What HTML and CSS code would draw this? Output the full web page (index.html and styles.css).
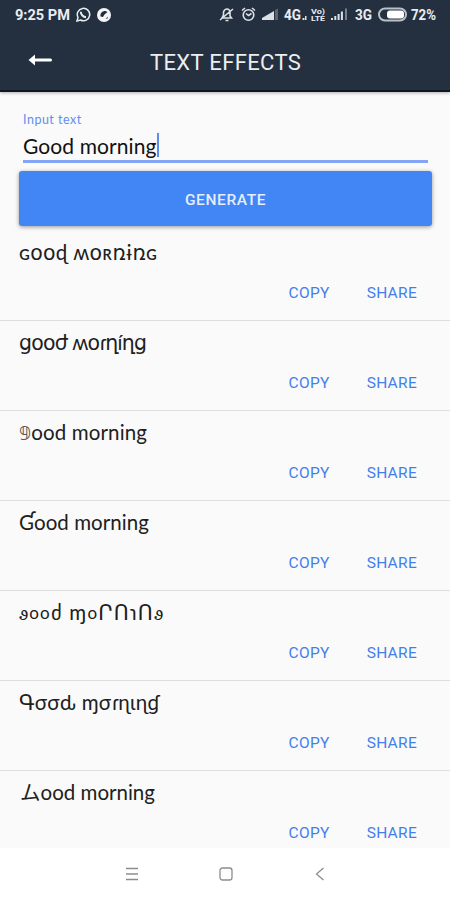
FILE: index.html
```html
<!DOCTYPE html>
<html lang="en">
<head>
    <meta charset="UTF-8">
    <meta name="viewport" content="width=device-width, initial-scale=1.0">
    <title>Text Effects</title>
    <link rel="stylesheet" href="styles.css">
</head>
<body>
    <header class="app-header">
        <div class="status-bar">
            <div class="status-left">
                <svg class="status-label" width="56" height="16"><text x="0" y="14" textLength="55" lengthAdjust="spacingAndGlyphs">9:25 PM</text></svg>
                <svg class="whatsapp" width="15" height="15" viewBox="0 0 15 15" fill="none" stroke="#e9edf1">
                    <path d="M1 14l1-3.6A6.2 6.2 0 1 1 4.600 13z" stroke-width="1.500"/>
                    <path d="M4.800 4.700c0 3 2.500 5.400 5.200 5.500" stroke-width="2"/>
                </svg>
                <svg class="browser" width="14" height="14" viewBox="0 0 14 14">
                    <circle cx="7" cy="7" r="7" fill="#f3f5f7"/>
                    <path d="M3.500 8.500C3 5 5.500 2.800 8.500 3L10.500 4 7.500 6.500 6 9zM8.500 11l2.500-2.500-.5 2z" fill="#222e3e"/>
                </svg>
            </div>
            <svg class="status-right" width="222" height="18" viewBox="218 6 222 18">
                <g fill="none" stroke="#dce1e6" stroke-width="1.600">
                    <path d="M220 20L233 9M222 18h9.500l-1.500-2v-4q-.5-3-3-3t-3.500 3V15zM225.500 20.500h3"/>
                    <circle cx="248.500" cy="15" r="5.300"/>
                    <path d="M242 10.500l3-2.500M252 8l3 2.500M246 13.500l2.500 2 3-2"/>
                </g>
                <g fill="#dce1e6">
                    <path d="M262 20v-2l12-7v9z"/>
                    <path d="M275 20h3V8.500l-3 1.500z" opacity=".3"/>
                    <path d="M331 20h2v-2h-2zM334.300 20h2v-4h-2zM337.600 20h2v-6h-2zM340.900 20h2v-8.500h-2z"/>
                    <path d="M345 20h2V8.500h-2z" opacity=".45"/>
                    <path d="M302.500 20v-2h2v2zM305 20v-4h1.500v4z"/>
                </g>
                <text x="284" y="20" textLength="17" lengthAdjust="spacingAndGlyphs">4G</text>
                <text class="volte" x="311" y="13.500" textLength="14" lengthAdjust="spacingAndGlyphs">Vo)</text>
                <text class="volte" x="311" y="21" textLength="14" lengthAdjust="spacingAndGlyphs">LTE</text>
                <text x="355" y="20" textLength="17" lengthAdjust="spacingAndGlyphs">3G</text>
                <rect x="379" y="8.500" width="27" height="12" rx="6" fill="none" stroke="#bac1c9" stroke-width="2"/>
                <rect x="387" y="10.500" width="17" height="8" rx="3" fill="#fff"/>
                <text x="411" y="20" textLength="25" lengthAdjust="spacingAndGlyphs">72%</text>
            </svg>
        </div>
        <div class="title-bar">
            <svg class="back" width="26" height="14" viewBox="0 0 26 14">
                <path d="M6 7h16.500" stroke="#fff" stroke-width="3" stroke-linecap="round"/>
                <path d="M0.500 7l6.500-5.500v11z" fill="#fff"/>
            </svg>
            <h1>TEXT EFFECTS</h1>
        </div>
    </header>

    <main>
        <div class="input-group">
            <label>Input text</label>
            <div class="input-text"><span>Good morning</span></div>
        </div>
        <button class="generate">GENERATE</button>

        <ul class="results">
            <li>
                <svg class="effect" width="220" height="30"><text x="19" y="20" textLength="138">ɢօօɖ ʍօʀռɨռɢ</text></svg>
                <div class="actions"><button>COPY</button><button>SHARE</button></div>
            </li>
            <li>
                <svg class="effect" width="220" height="30"><text x="19" y="20" textLength="128">ցօօժ ʍօɾղíղց</text></svg>
                <div class="actions"><button>COPY</button><button>SHARE</button></div>
            </li>
            <li>
                <svg class="effect" width="220" height="30"><text x="19" y="20" textLength="128"><tspan class="outlined">𝟡</tspan>ood morning</text></svg>
                <div class="actions"><button>COPY</button><button>SHARE</button></div>
            </li>
            <li>
                <svg class="effect" width="220" height="30"><text x="19" y="20" textLength="130">Ɠood morning</text></svg>
                <div class="actions"><button>COPY</button><button>SHARE</button></div>
            </li>
            <li>
                <svg class="effect" width="220" height="30"><text x="19" y="20" textLength="144"><tspan class="curl">ꮽ</tspan><tspan class="ring" dy="-1">oo</tspan><tspan dy="1">ძ ɱ</tspan><tspan class="ring" dy="-1">o</tspan><tspan dy="1">ՐՈɿՈ</tspan><tspan class="curl">ꮽ</tspan></text></svg>
                <div class="actions"><button>COPY</button><button>SHARE</button></div>
            </li>
            <li>
                <svg class="effect" width="220" height="30"><text x="19" y="20" textLength="140">Գσσԃ ɱσɾɳιɳɠ</text></svg>
                <div class="actions"><button>COPY</button><button>SHARE</button></div>
            </li>
            <li>
                <svg class="effect" width="220" height="30"><text x="20" y="20" textLength="135">ムood morning</text></svg>
                <div class="actions"><button>COPY</button><button>SHARE</button></div>
            </li>
        </ul>
    </main>

    <nav class="nav-bar">
        <svg width="14" height="14" viewBox="0 0 14 14"><path d="M1 1.500h12M1 7h12M1 12.500h12"/></svg>
        <svg width="14" height="14" viewBox="0 0 14 14"><rect x="1" y="1" width="12" height="12" rx="2.500"/></svg>
        <svg width="14" height="14" viewBox="0 0 14 14"><path d="M10.500 1l-7 6 7 6"/></svg>
    </nav>
</body>
</html>
```
FILE: styles.css
```css
* {
    box-sizing: border-box;
}

body {
    margin: 0;
    height: 900px;
    overflow: hidden;
    display: flex;
    flex-direction: column;
    background-color: #fafafa;
    font-family: Lato, "Noto Sans", "DejaVu Sans", "Noto Sans CJK JP", sans-serif;
}

.app-header {
    height: 92px;
    flex-shrink: 0;
    background-color: #243040;
    border-bottom: 2px solid #0d1725;
    box-shadow: 0 1px 3px rgba(50, 30, 50, 0.35);
}

.status-bar {
    height: 30px;
    display: flex;
    justify-content: space-between;
    padding: 6px 10px 0 15px;
}

.status-left {
    display: flex;
    gap: 5px;
}

.whatsapp {
    margin-top: 1px;
}

.browser {
    margin: 2px 0 0 1px;
}

.status-bar text {
    font-family: Roboto, sans-serif;
    font-size: 14px;
    font-weight: 700;
    fill: #e9edf1;
}

.status-bar .volte {
    font-size: 8px;
}

.title-bar {
    height: 60px;
    display: flex;
    align-items: center;
    padding-left: 28px;
}

.back {
    margin-bottom: 1px;
}

h1 {
    margin: 4px 0 0 96px;
    font-family: Roboto, sans-serif;
    font-size: 22px;
    font-weight: 400;
    letter-spacing: 0.35px;
    color: #eceef0;
}

main {
    height: 756px;
    overflow: hidden;
}

.input-group {
    width: 405px;
    height: 71px;
    margin-left: 23px;
    padding-top: 20px;
    border-bottom: 3px solid #83a5f4;
}

label {
    display: block;
    height: 15px;
    font-size: 12.5px;
    line-height: 15px;
    letter-spacing: 0.5px;
    color: #628df0;
}

.input-text {
    display: flex;
    color: #111;
    font-size: 21px;
    line-height: 25px;
    letter-spacing: 0.1px;
    margin-top: 6px;
}

.input-text span {
    border-right: 2px solid #5b8def;
    height: 24px;
    line-height: 26px;
}

.generate {
    display: block;
    width: 413px;
    height: 55px;
    margin: 8px 0 0 19px;
    padding-top: 4px;
    border: none;
    border-radius: 3px;
    background-color: #4285f4;
    color: #e5eeff;
    font-family: Roboto, sans-serif;
    font-size: 15.5px;
    font-weight: 500;
    letter-spacing: 0.6px;
    box-shadow: 0 1px 4px rgba(0, 0, 0, 0.4);
}

.results {
    list-style: none;
    margin: 5px 0 0;
    padding: 0;
}

.results li {
    height: 90px;
    padding-top: 9px;
    border-bottom: 1px solid #dedede;
}

.effect {
    display: block;
}

.effect text {
    font-size: 20.5px;
    fill: #202020;
}

.effect .outlined {
    font-size: 19px;
    fill: #555;
}

.effect .curl {
    font-size: 21px;
}

.effect .ring {
    font-size: 17px;
}

.actions {
    display: flex;
    justify-content: flex-end;
    gap: 37px;
    padding: 12px 33px 0 0;
}

.actions button {
    padding: 0;
    border: none;
    background: none;
    color: #427fec;
    font-family: Roboto, sans-serif;
    font-size: 15.5px;
    line-height: 23px;
    letter-spacing: 0.3px;
}

.nav-bar {
    flex: 1;
    display: flex;
    justify-content: center;
    align-items: center;
    gap: 80px;
    padding-left: 2px;
    background-color: #fff;
}

.nav-bar svg {
    fill: none;
    stroke: #8d8d8d;
    stroke-width: 1.3;
}
```
